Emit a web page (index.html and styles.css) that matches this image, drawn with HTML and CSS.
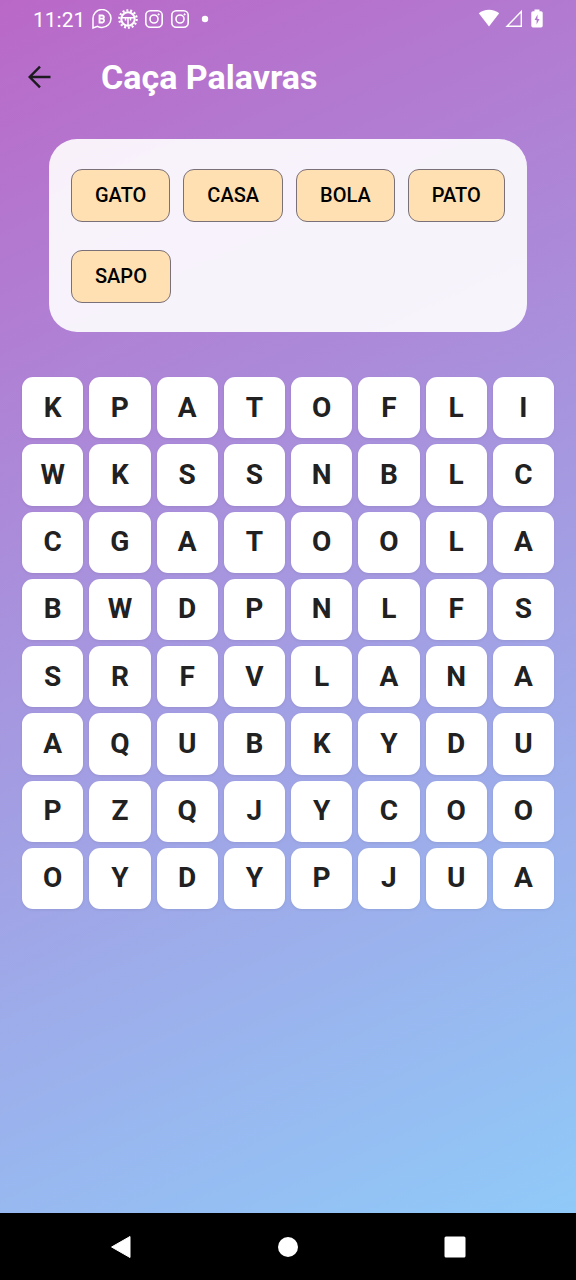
FILE: index.html
```html
<!DOCTYPE html>
<html lang="pt-BR">
<head>
<meta charset="utf-8">
<meta name="viewport" content="width=device-width, initial-scale=1">
<title>Caça Palavras</title>
<link rel="stylesheet" href="styles.css">
</head>
<body>
<div class="screen">
  <div class="status-bar">
    <time class="clock">11:21</time>
    <div class="notifications">
      <svg viewBox="0 0 20 20" width="20" height="20" fill="none" stroke="currentColor" stroke-width="1.5">
        <path d="M1 19V10a9 9 0 1 1 9 8.500q-2.500 0-4.500-1.200z"/>
        <path d="M7.500 6.500v7h3.200a2 2 0 0 0 0-3.800H7.500h2.800a1.600 1.600 0 0 0 0-3.200z" stroke-width="1.800"/>
      </svg>
      <svg viewBox="0 0 20 20" width="20" height="20" fill="none" stroke="currentColor">
        <circle cx="10" cy="10" r="8.700" stroke-width="2.200" stroke-dasharray="2 1.904"/>
        <circle cx="10" cy="10" r="6.700" stroke-width="2"/>
        <path d="M3.500 8.800h13M10 9v7.500M7.500 9v2.500M12.500 9v2.500" stroke-width="1.500"/>
      </svg>
      <svg viewBox="0 0 20 20" width="20" height="20" fill="none" stroke="currentColor" stroke-width="1.6">
        <rect x="1.800" y="1.800" width="16.400" height="16.400" rx="4.500"/>
        <circle cx="10" cy="10" r="4"/>
        <circle cx="14.600" cy="5.400" r=".7" fill="currentColor" stroke-width=".8"/>
      </svg>
      <svg viewBox="0 0 20 20" width="20" height="20" fill="none" stroke="currentColor" stroke-width="1.6">
        <rect x="1.800" y="1.800" width="16.400" height="16.400" rx="4.500"/>
        <circle cx="10" cy="10" r="4"/>
        <circle cx="14.600" cy="5.400" r=".7" fill="currentColor" stroke-width=".8"/>
      </svg>
      <svg viewBox="0 0 20 20" width="20" height="20"><circle cx="9" cy="10" r="3.200" fill="currentColor"/></svg>
    </div>
    <div class="system">
      <svg viewBox="0 0 22 20" width="22" height="20"><path d="M11 17.500.8 4.300Q5 .8 11 .8t10.200 3.500z" fill="currentColor"/></svg>
      <svg viewBox="0 0 21 20" width="21" height="20"><path d="M2 17.300 16.300 2.500v14.800z" fill="none" stroke="currentColor" stroke-width="1.400"/></svg>
      <svg viewBox="0 0 12 20" width="12" height="20"><path fill="currentColor" fill-rule="evenodd" d="M3.500.500h5v1.700H10q1.700 0 1.700 1.600v13q0 1.700-1.700 1.700H2Q.3 18.500.3 16.800v-13Q.3 2.200 2 2.200h1.500zM6.500 5.500 3.600 11h2v4.500L8.500 10H6.500z"/></svg>
    </div>
  </div>
  <header class="app-bar">
    <button class="back" type="button" aria-label="Voltar">
      <svg viewBox="0 0 24 24" width="24" height="24" fill="none" stroke="currentColor" stroke-width="2.400"><path d="M22.500 12H2M12 1.700 1.700 12 12 22.300"/></svg>
    </button>
    <h1 class="title">Caça Palavras</h1>
  </header>
  <main class="game">
    <ul class="words">
      <li class="word">GATO</li>
      <li class="word">CASA</li>
      <li class="word">BOLA</li>
      <li class="word">PATO</li>
      <li class="word">SAPO</li>
    </ul>
    <div class="board">
      <button class="cell" type="button">K</button><button class="cell" type="button">P</button><button class="cell" type="button">A</button><button class="cell" type="button">T</button><button class="cell" type="button">O</button><button class="cell" type="button">F</button><button class="cell" type="button">L</button><button class="cell" type="button">I</button>
      <button class="cell" type="button">W</button><button class="cell" type="button">K</button><button class="cell" type="button">S</button><button class="cell" type="button">S</button><button class="cell" type="button">N</button><button class="cell" type="button">B</button><button class="cell" type="button">L</button><button class="cell" type="button">C</button>
      <button class="cell" type="button">C</button><button class="cell" type="button">G</button><button class="cell" type="button">A</button><button class="cell" type="button">T</button><button class="cell" type="button">O</button><button class="cell" type="button">O</button><button class="cell" type="button">L</button><button class="cell" type="button">A</button>
      <button class="cell" type="button">B</button><button class="cell" type="button">W</button><button class="cell" type="button">D</button><button class="cell" type="button">P</button><button class="cell" type="button">N</button><button class="cell" type="button">L</button><button class="cell" type="button">F</button><button class="cell" type="button">S</button>
      <button class="cell" type="button">S</button><button class="cell" type="button">R</button><button class="cell" type="button">F</button><button class="cell" type="button">V</button><button class="cell" type="button">L</button><button class="cell" type="button">A</button><button class="cell" type="button">N</button><button class="cell" type="button">A</button>
      <button class="cell" type="button">A</button><button class="cell" type="button">Q</button><button class="cell" type="button">U</button><button class="cell" type="button">B</button><button class="cell" type="button">K</button><button class="cell" type="button">Y</button><button class="cell" type="button">D</button><button class="cell" type="button">U</button>
      <button class="cell" type="button">P</button><button class="cell" type="button">Z</button><button class="cell" type="button">Q</button><button class="cell" type="button">J</button><button class="cell" type="button">Y</button><button class="cell" type="button">C</button><button class="cell" type="button">O</button><button class="cell" type="button">O</button>
      <button class="cell" type="button">O</button><button class="cell" type="button">Y</button><button class="cell" type="button">D</button><button class="cell" type="button">Y</button><button class="cell" type="button">P</button><button class="cell" type="button">J</button><button class="cell" type="button">U</button><button class="cell" type="button">A</button>
    </div>
  </main>
</div>
<nav class="nav-bar" aria-label="Sistema">
  <button class="nav-button" type="button" aria-label="Voltar"><svg viewBox="0 0 24 24" width="24" height="24"><path d="M2.600 12 21 1.500v21z" fill="currentColor" stroke="currentColor" stroke-linejoin="round"/></svg></button>
  <button class="nav-button" type="button" aria-label="Início"><svg viewBox="0 0 24 24" width="24" height="24"><circle cx="12" cy="12" r="10" fill="currentColor"/></svg></button>
  <button class="nav-button" type="button" aria-label="Recentes"><svg viewBox="0 0 24 24" width="24" height="24"><rect x="1.500" y="1.500" width="21" height="21" rx="1.500" fill="currentColor"/></svg></button>
</nav>
</body>
</html>
```
FILE: styles.css
```css
* {
  box-sizing: border-box;
}

body {
  margin: 0;
  min-height: 100vh;
  display: flex;
  flex-direction: column;
  font-family: Roboto, "Noto Sans", sans-serif;
  background: #000;
}

svg {
  display: block;
}

button {
  padding: 0;
  border: 0;
  background: none;
  font: inherit;
  cursor: pointer;
}

.screen {
  flex: 1;
  background: linear-gradient(155deg, #ba68c8, #90caf9);
}

.status-bar {
  display: flex;
  align-items: center;
  height: 38px;
  padding: 0 33px;
  color: #fff;
}

.clock {
  font-size: 21px;
  line-height: 24px;
  padding-top: 2px;
}

.notifications {
  display: flex;
  gap: 6px;
  margin-left: 7px;
}

.system {
  display: flex;
  gap: 5px;
  margin-left: auto;
}

.app-bar {
  display: flex;
  align-items: center;
  height: 78px;
  padding: 0 28px;
  gap: 49px;
}

.back {
  color: #1d1b20;
}

.title {
  margin: 0;
  font-size: 34px;
  line-height: 40px;
  font-weight: 700;
  color: #fff;
}

.game {
  padding: 23px 22px;
}

.words {
  display: flex;
  flex-wrap: wrap;
  gap: 28px 13px;
  margin: 0 27px 45px;
  padding: 30px 18px 29px 22px;
  list-style: none;
  background: rgba(255, 255, 255, 0.9);
  border-radius: 28px;
}

.word {
  padding: 12px 23px;
  border: 1px solid #7a7077;
  border-radius: 11px;
  background: #ffe0b2;
  font-size: 20px;
  line-height: 27px;
  font-weight: 500;
  color: #000;
}

.board {
  display: grid;
  grid-template-columns: repeat(8, 1fr);
  gap: 6px;
}

.cell {
  aspect-ratio: 1;
  border-radius: 11px;
  background: #fff;
  box-shadow: 0 1px 3px rgba(0, 0, 0, 0.08);
  font-size: 28px;
  line-height: 32px;
  font-weight: 700;
  color: #212121;
}

.nav-bar {
  display: flex;
  align-items: center;
  height: 67px;
  padding: 0 37px;
  color: #fff;
}

.nav-button {
  flex: 1;
  display: flex;
  justify-content: center;
  color: inherit;
}
```
